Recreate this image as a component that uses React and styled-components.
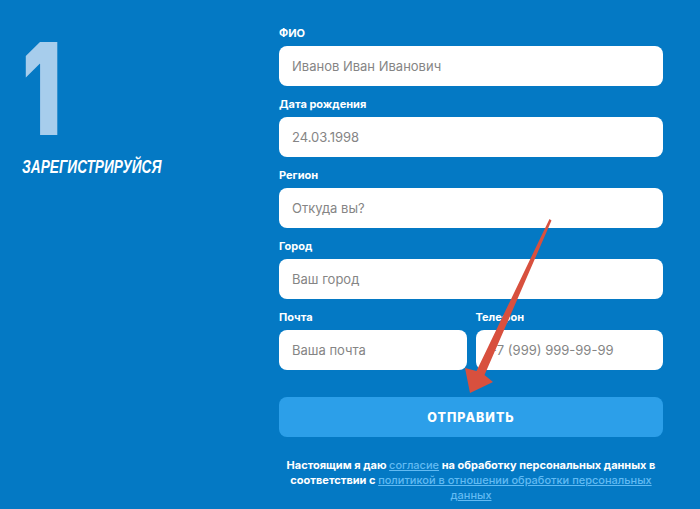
import React from "react";
import styled, { createGlobalStyle } from "styled-components";

const GlobalStyle = createGlobalStyle`
  html, body {
    margin: 0;
    padding: 0;
    background: #0479c4;
  }
  * {
    box-sizing: border-box;
  }
`;

const Page = styled.div`
  position: relative;
  width: 700px;
  height: 509px;
  overflow: hidden;
  background: #0479c4;
  display: flex;
`;

const Side = styled.div`
  width: 279px;
  padding: 25px 0 0 22px;
  display: flex;
  flex-direction: column;
`;

const StepNumber = styled.div`
  font-family: Inter, "Liberation Sans", sans-serif;
  font-weight: 900;
  font-size: 128px;
  line-height: 1;
  height: 130px;
  color: #a7cdec;
  transform: scaleX(0.68);
  transform-origin: left center;
`;

const StepTitle = styled.div`
  margin-top: 2px;
  font-family: "Liberation Sans", Arial, sans-serif;
  font-weight: 700;
  font-style: italic;
  font-size: 19px;
  line-height: 1;
  color: #fff;
  white-space: nowrap;
  transform: scaleX(0.72);
  transform-origin: left center;
`;

const Form = styled.form`
  width: 384px;
  padding-top: 26px;
  display: flex;
  flex-direction: column;
  font-family: Inter, "Open Sans", sans-serif;
`;

const Field = styled.div`
  display: flex;
  flex-direction: column;
  margin-bottom: 11px;
  min-width: 0;
`;

const Label = styled.label`
  font-size: 11px;
  font-weight: 700;
  line-height: 14px;
  color: #fff;
  margin-bottom: 6px;
`;

const Input = styled.input`
  height: 40px;
  width: 100%;
  border: none;
  border-radius: 8px;
  background: #fff;
  padding: 0 13px;
  font-family: Inter, "Open Sans", sans-serif;
  font-size: 13px;
  color: #333;
  outline: none;
  &::placeholder {
    color: #858585;
  }
`;

const Row = styled.div`
  display: grid;
  grid-template-columns: 1fr 1fr;
  column-gap: 9px;
`;

const Submit = styled.button`
  margin-top: 16px;
  height: 40px;
  border: none;
  border-radius: 8px;
  background: #2c9fe9;
  color: #fff;
  font-family: Inter, "Open Sans", sans-serif;
  font-size: 12.5px;
  font-weight: 800;
  letter-spacing: 1px;
  cursor: pointer;
`;

const Consent = styled.p`
  margin: 21px 0 0;
  text-align: center;
  font-size: 11px;
  font-weight: 700;
  line-height: 15px;
  color: #fff;
`;

const Link = styled.a`
  color: #62bbf3;
  text-decoration: underline;
  font-weight: 500;
`;

const Arrow = styled.svg`
  position: absolute;
  left: 0;
  top: 0;
  pointer-events: none;
`;

const fields = [
  { label: "ФИО", placeholder: "Иванов Иван Иванович" },
  { label: "Дата рождения", placeholder: "24.03.1998" },
  { label: "Регион", placeholder: "Откуда вы?" },
  { label: "Город", placeholder: "Ваш город" },
];

export default function App() {
  return (
    <>
      <GlobalStyle />
      <Page>
        <Side>
          <StepNumber>1</StepNumber>
          <StepTitle>ЗАРЕГИСТРИРУЙСЯ</StepTitle>
        </Side>
        <Form onSubmit={(e) => e.preventDefault()}>
          {fields.map((f) => (
            <Field key={f.label}>
              <Label>{f.label}</Label>
              <Input placeholder={f.placeholder} />
            </Field>
          ))}
          <Row>
            <Field>
              <Label>Почта</Label>
              <Input placeholder="Ваша почта" />
            </Field>
            <Field>
              <Label>Телефон</Label>
              <Input placeholder="+7 (999) 999-99-99" />
            </Field>
          </Row>
          <Submit type="submit">ОТПРАВИТЬ</Submit>
          <Consent>
            Настоящим я даю <Link href="#">согласие</Link> на обработку
            персональных данных в соответствии с{" "}
            <Link href="#">
              политикой в отношении обработки персональных данных
            </Link>
          </Consent>
        </Form>
        <Arrow width="700" height="509" viewBox="0 0 700 509">
          <polygon
            points="549.5,219 551.5,220.5 484.5,375 493,382 470,393 465,368 476.5,371"
            fill="#d8503e"
          />
        </Arrow>
      </Page>
    </>
  );
}
